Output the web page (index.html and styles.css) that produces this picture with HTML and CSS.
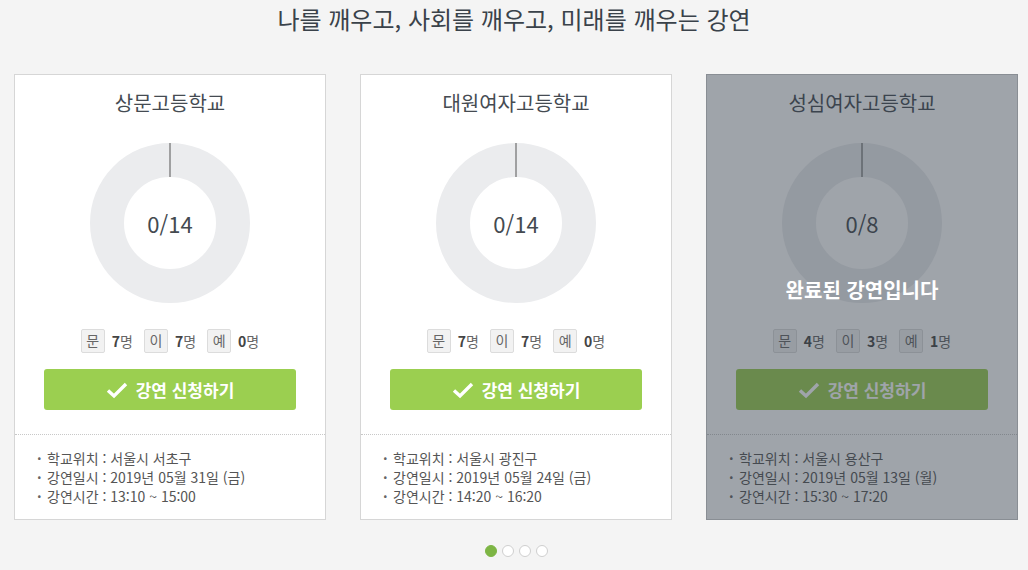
FILE: index.html
```html
<!DOCTYPE html>
<html lang="ko">
<head>
    <meta charset="UTF-8">
    <title>강연 신청</title>
    <link rel="stylesheet" href="styles.css">
</head>
<body>
    <h1 class="page-title">나를 깨우고, 사회를 깨우고, 미래를 깨우는 강연</h1>

    <div class="slider">
        <div class="card">
            <h2 class="school">상문고등학교</h2>
            <div class="donut">
                <svg width="160" height="160" viewBox="0 0 160 160">
                    <circle cx="80" cy="80" r="63" fill="none" stroke="#ebecee" stroke-width="34"/>
                    <line x1="80" y1="0" x2="80" y2="34" stroke="#555" stroke-width="1"/>
                </svg>
                <span class="donut-label">0/14</span>
            </div>
            <div class="counts">
                <span class="tag">문</span><span class="num"><b>7</b>명</span>
                <span class="tag">이</span><span class="num"><b>7</b>명</span>
                <span class="tag">예</span><span class="num"><b>0</b>명</span>
            </div>
            <button class="apply-btn">
                <svg width="22" height="18" viewBox="0 0 22 18"><path d="M2 9.5 L8 15 L20 3" fill="none" stroke="#fff" stroke-width="3.4"/></svg>
                강연 신청하기
            </button>
            <ul class="info">
                <li>학교위치 : 서울시 서초구</li>
                <li>강연일시 : 2019년 05월 31일 (금)</li>
                <li>강연시간 : 13:10 ~ 15:00</li>
            </ul>
        </div>

        <div class="card">
            <h2 class="school">대원여자고등학교</h2>
            <div class="donut">
                <svg width="160" height="160" viewBox="0 0 160 160">
                    <circle cx="80" cy="80" r="63" fill="none" stroke="#ebecee" stroke-width="34"/>
                    <line x1="80" y1="0" x2="80" y2="34" stroke="#555" stroke-width="1"/>
                </svg>
                <span class="donut-label">0/14</span>
            </div>
            <div class="counts">
                <span class="tag">문</span><span class="num"><b>7</b>명</span>
                <span class="tag">이</span><span class="num"><b>7</b>명</span>
                <span class="tag">예</span><span class="num"><b>0</b>명</span>
            </div>
            <button class="apply-btn">
                <svg width="22" height="18" viewBox="0 0 22 18"><path d="M2 9.5 L8 15 L20 3" fill="none" stroke="#fff" stroke-width="3.4"/></svg>
                강연 신청하기
            </button>
            <ul class="info">
                <li>학교위치 : 서울시 광진구</li>
                <li>강연일시 : 2019년 05월 24일 (금)</li>
                <li>강연시간 : 14:20 ~ 16:20</li>
            </ul>
        </div>

        <div class="card done">
            <h2 class="school">성심여자고등학교</h2>
            <div class="donut">
                <svg width="160" height="160" viewBox="0 0 160 160">
                    <circle cx="80" cy="80" r="63" fill="none" stroke="#ebecee" stroke-width="34"/>
                    <line x1="80" y1="0" x2="80" y2="34" stroke="#555" stroke-width="1"/>
                </svg>
                <span class="donut-label">0/8</span>
            </div>
            <div class="counts">
                <span class="tag">문</span><span class="num"><b>4</b>명</span>
                <span class="tag">이</span><span class="num"><b>3</b>명</span>
                <span class="tag">예</span><span class="num"><b>1</b>명</span>
            </div>
            <button class="apply-btn">
                <svg width="22" height="18" viewBox="0 0 22 18"><path d="M2 9.5 L8 15 L20 3" fill="none" stroke="#fff" stroke-width="3.4"/></svg>
                강연 신청하기
            </button>
            <ul class="info">
                <li>학교위치 : 서울시 용산구</li>
                <li>강연일시 : 2019년 05월 13일 (월)</li>
                <li>강연시간 : 15:30 ~ 17:20</li>
            </ul>
            <div class="done-overlay"></div>
            <div class="done-text">완료된 강연입니다</div>
        </div>
    </div>

    <div class="dots">
        <span class="dot active"></span>
        <span class="dot"></span>
        <span class="dot"></span>
        <span class="dot"></span>
    </div>
</body>
</html>
```

FILE: styles.css
```css
body {
    margin: 0;
    font-family: "Noto Sans CJK KR", "Noto Sans", sans-serif;
    background: #f4f4f4;
    color: #444a50;
}

.page-title {
    margin: 0;
    height: 40px;
    line-height: 38px;
    font-size: 24px;
    font-weight: 400;
    text-align: center;
    color: #3a424a;
}

.slider {
    display: flex;
    gap: 34px;
    padding: 34px 0 0 14px;
}

.card {
    position: relative;
    width: 312px;
    box-sizing: border-box;
    background: #fff;
    border: 1px solid #d6d6d6;
    display: flex;
    flex-direction: column;
    align-items: center;
}

.school {
    margin: 14px 0 0 0;
    font-size: 20px;
    line-height: 28px;
    font-weight: 400;
    color: #454b52;
}

.donut {
    position: relative;
    width: 160px;
    height: 160px;
    margin-top: 26px;
}

.donut svg {
    display: block;
}

.donut-label {
    position: absolute;
    inset: 0;
    display: flex;
    align-items: center;
    justify-content: center;
    font-size: 22px;
    color: #444a50;
}

.counts {
    display: flex;
    align-items: center;
    margin-top: 26px;
    height: 24px;
    font-size: 14px;
    color: #666;
}

.tag {
    width: 22px;
    height: 22px;
    line-height: 21px;
    text-align: center;
    border: 1px solid #dcdcdc;
    background: #f2f2f2;
    border-radius: 2px;
    color: #666;
}

.num {
    margin: 0 11px 0 7px;
}

.num:last-child {
    margin-right: 0;
}

.num b {
    color: #444;
    font-weight: 700;
}

.apply-btn {
    margin-top: 16px;
    width: 252px;
    height: 41px;
    border: none;
    border-radius: 3px;
    background: #9bcf50;
    color: #fff;
    font-family: inherit;
    font-size: 17px;
    font-weight: 700;
    display: flex;
    align-items: center;
    justify-content: center;
    gap: 8px;
    cursor: pointer;
}

.info {
    align-self: stretch;
    list-style: none;
    margin: 24px 0 0 0;
    padding: 14px 0 13px 22px;
    border-top: 1px dotted #c8c8c8;
    font-size: 14px;
    line-height: 19px;
    color: #555;
}

.info li:before {
    content: "·";
    display: inline-block;
    width: 10px;
    font-weight: 700;
    color: #666;
}

.done-overlay {
    position: absolute;
    inset: -1px;
    background: rgba(50, 62, 75, 0.47);
}

.done-text {
    position: absolute;
    left: 0;
    right: 0;
    top: 200px;
    text-align: center;
    font-size: 20px;
    font-weight: 700;
    color: #fff;
}

.dots {
    display: flex;
    justify-content: center;
    gap: 5px;
    margin-top: 25px;
    padding-left: 4px;
}

.dot {
    width: 12px;
    height: 12px;
    box-sizing: border-box;
    border-radius: 50%;
    border: 1px solid #cfcfcf;
    background: #fff;
}

.dot.active {
    background: #7db544;
    border-color: #7db544;
}
```
